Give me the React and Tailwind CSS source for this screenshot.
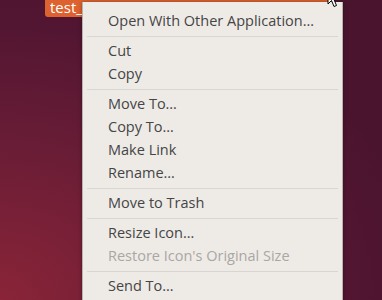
import React from "react";

const Item = ({ children, disabled }) => (
  <div
    className={
      "h-[23px] flex items-center pl-[25px] text-[14.5px] leading-none " +
      (disabled ? "text-[#aaa6a2]" : "text-[#454545]")
    }
  >
    {children}
  </div>
);

const Sep = () => (
  <div className="py-[3px] px-[4px]">
    <div className="h-px bg-[#d9d5d0]" />
  </div>
);

export default function App() {
  return (
    <div
      className="relative w-[382px] h-[300px] overflow-hidden"
      style={{
        fontFamily: '"Open Sans", "Noto Sans", sans-serif',
        background:
          "radial-gradient(ellipse 420px 340px at 0% 100%, #8a2438 0%, #6a1d36 45%, #531632 80%, #4b142e 100%)",
      }}
    >
      {/* selected icon label */}
      <div className="absolute left-[45px] top-0 h-[17px] w-[290px] bg-[#dd6230] rounded-bl-[3px]">
        <span className="absolute left-[5px] top-[-2px] text-white text-[15px] leading-[19px]">
          test_
        </span>
      </div>

      {/* context menu */}
      <div className="absolute left-[82px] top-[2px] w-[261px] h-[310px] bg-[#eeebe7] border-x border-[#b9b3ad] shadow-[0_0_4px_rgba(0,0,0,0.35)] pt-[7.5px]">
        <Item>Open With Other Application…</Item>
        <Sep />
        <Item>Cut</Item>
        <Item>Copy</Item>
        <Sep />
        <Item>Move To…</Item>
        <Item>Copy To…</Item>
        <Item>Make Link</Item>
        <Item>Rename…</Item>
        <Sep />
        <Item>Move to Trash</Item>
        <Sep />
        <Item>Resize Icon…</Item>
        <Item disabled>Restore Icon's Original Size</Item>
        <Sep />
        <Item>Send To…</Item>
      </div>

      {/* mouse pointer tip (cut off at top) */}
      <svg
        className="absolute left-[327px] top-[-12px]"
        width="16"
        height="22"
        viewBox="0 0 16 22"
      >
        <path
          d="M1 1 L1 16 L4.5 12.5 L7 18.5 L9.5 17.5 L7 11.5 L12 11.5 Z"
          fill="white"
          stroke="black"
          strokeWidth="1"
          strokeLinejoin="round"
        />
      </svg>
    </div>
  );
}
